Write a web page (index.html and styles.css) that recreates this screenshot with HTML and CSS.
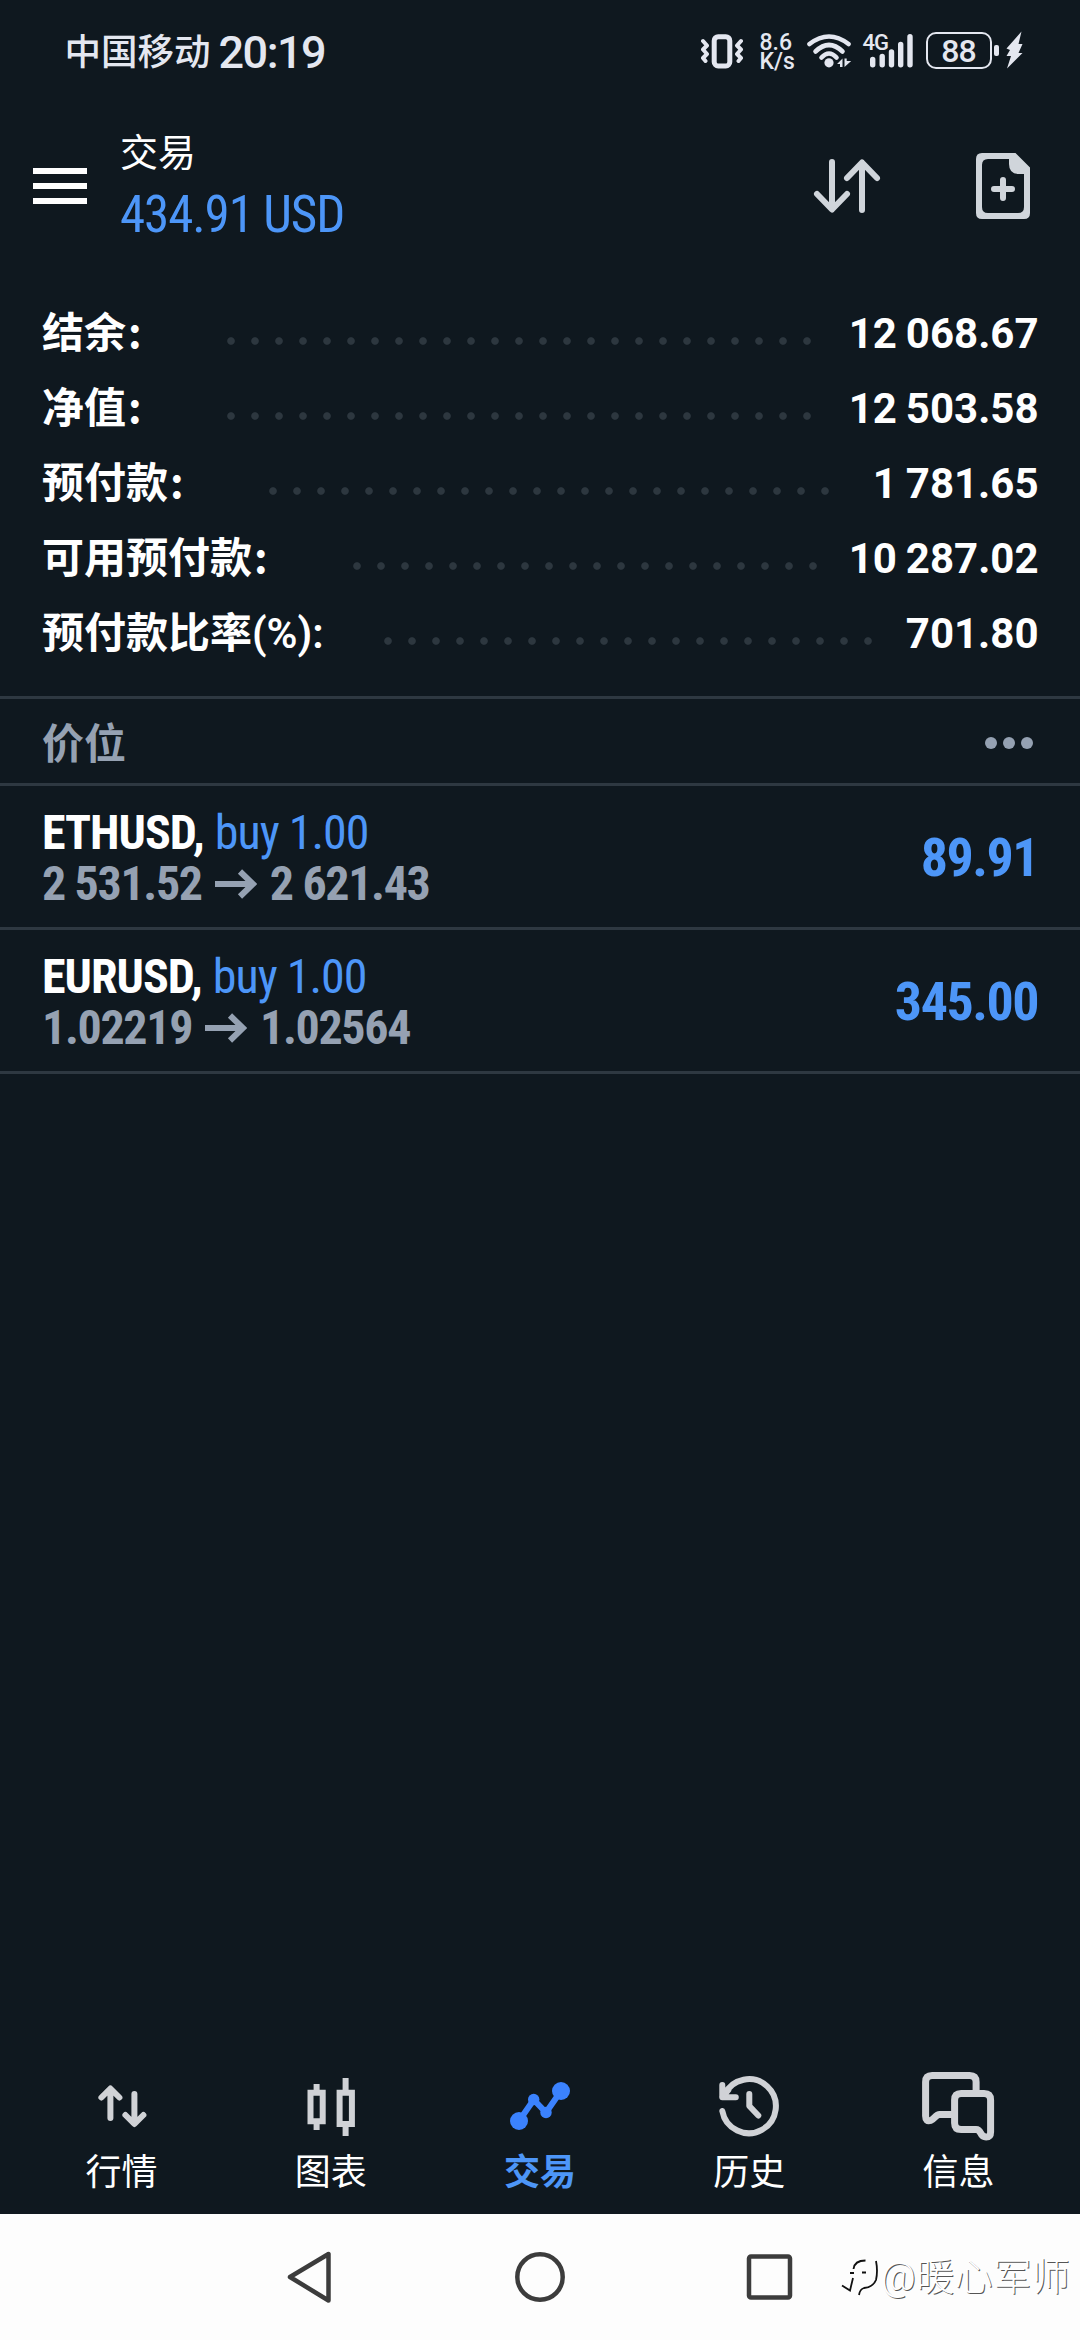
FILE: index.html
```
<!DOCTYPE html>
<html lang="zh-CN">
<head>
<meta charset="utf-8">
<title>交易</title>
<link rel="stylesheet" href="styles.css">
</head>
<body>
<div class="screen">
  <div class="status">
    <span class="carrier">中国移动</span>
    <span class="clock">20:19</span>
    <div class="indicators">
      <svg class="vibrate" width="43" height="40" viewBox="700 30 43 40"><rect x="713.2" y="36.7" width="15.6" height="29.3" rx="4" fill="none" stroke="#e4e7f0" stroke-width="5"/><path d="M702 41l4 4.500-4 4 4 4.500-4 4 2.500 3M740 41l-4 4.500 4 4-4 4.500 4 4-2.500 3" fill="none" stroke="#e4e7f0" stroke-width="4" stroke-linejoin="round" stroke-linecap="round"/></svg>
      <div class="speed"><span>8.6</span><span>K/s</span></div>
      <svg class="wifi" width="46" height="40" viewBox="806 30 46 40"><g fill="none" stroke="#e4e7f0" stroke-width="4.600" stroke-linecap="round"><path d="M808.500 44Q828 29 847.500 44"/><path d="M814.500 51.500Q828 38.500 841.500 51.500"/><path d="M820.500 57.500Q828 49.500 835.500 57.500"/></g><circle cx="828" cy="62.800" r="4.600" fill="#e4e7f0"/><path d="M836 64l5.500-5.500V67h-2.500v-3zM843.500 67v-8.500h2.200v2.500h4.500z" fill="#e4e7f0"/></svg>
      <div class="signal"><span class="net">4G</span><svg width="44" height="40" viewBox="869 30 44 40"><path d="M871.700 59.500v5.300M881.200 56.500v8.300M890.500 52v12.800M899.700 44.500v20.300M909 36.800v28" stroke="#e4e7f0" stroke-width="5.400" stroke-linecap="round"/></svg></div>
      <div class="battery">88</div>
      <i class="nub"></i>
      <svg class="bolt" width="18" height="38" viewBox="1003 31 18 38"><path d="M1019.500 31.500L1004.500 48.500l3.500 1.500-3.500 6h4.500L1005 68.500 1020.500 53h-4l4-9h-4z" fill="#e4e7f0"/></svg>
    </div>
  </div>

  <header class="header">
    <div class="menu"><i></i><i></i><i></i></div>
    <div class="titles"><div class="title">交易</div><div class="amount">434.91 USD</div></div>
    <svg class="sort" width="72" height="66" viewBox="810 153 72 66"><path d="M831 162v47M816 194l15 15.500 15-15.500M861 210v-47M846 178l15-15.500 15 15.500" fill="none" stroke="#d0d5db" stroke-width="6" stroke-linecap="round" stroke-linejoin="round"/></svg>
    <svg class="new-order" width="54" height="66" viewBox="975 153 54 66"><path d="M981 153h33.500L1029 167.500V213q0 6-6 6h-42q-6 0-6-6v-54q0-6 6-6zM987 159q-6 0-6 6v42q0 6 6 6h30q6 0 6-6v-33h-5q-10 0-10-10v-5z" fill="#d0d5db" fill-rule="evenodd"/><path d="M1002 180v18M993 189h18" stroke="#d0d5db" stroke-width="6" stroke-linecap="round"/></svg>
  </header>

  <section class="summary">
    <div class="row"><span class="label">结余<span class="colon">:</span></span><i class="dots" style="width:600px"></i><span class="value">12 068.67</span></div>
    <div class="row"><span class="label">净值<span class="colon">:</span></span><i class="dots" style="width:600px"></i><span class="value">12 503.58</span></div>
    <div class="row"><span class="label">预付款<span class="colon">:</span></span><i class="dots" style="width:576px"></i><span class="value">1 781.65</span></div>
    <div class="row"><span class="label">可用预付款<span class="colon">:</span></span><i class="dots" style="width:480px"></i><span class="value">10 287.02</span></div>
    <div class="row"><span class="label ratio">预付款比率<span class="latin">(%):</span></span><i class="dots" style="width:504px"></i><span class="value">701.80</span></div>
  </section>

  <div class="section-head"><span>价位</span><svg class="more" width="48" height="12" viewBox="0 0 48 12"><g fill="#95a1b2"><circle cx="6" cy="6" r="6"/><circle cx="24" cy="6" r="6"/><circle cx="42" cy="6" r="6"/></g></svg></div>

  <div class="position">
    <div class="detail">
      <div class="line"><b>ETHUSD,</b><span class="side">buy 1.00</span></div>
      <div class="line prices"><span>2 531.52</span><svg width="42" height="30" viewBox="0 0 42 30"><path d="M0 15h38M25 2.500L38 15 25 27.500" fill="none" stroke="#95a1b2" stroke-width="6"/></svg><span>2 621.43</span></div>
    </div>
    <div class="profit">89.91</div>
  </div>
  <div class="position">
    <div class="detail">
      <div class="line"><b>EURUSD,</b><span class="side">buy 1.00</span></div>
      <div class="line prices"><span>1.02219</span><svg width="42" height="30" viewBox="0 0 42 30"><path d="M0 15h38M25 2.500L38 15 25 27.500" fill="none" stroke="#95a1b2" stroke-width="6"/></svg><span>1.02564</span></div>
    </div>
    <div class="profit">345.00</div>
  </div>

  <nav class="tabs">
    <div class="tab"><svg width="90" height="75" viewBox="76.600 2070 90 75"><path d="M110 2118v-29M101 2097.500l9-9 9 9M134 2094v29M125 2115l9 9 9-9" fill="none" stroke="#d0d2d6" stroke-width="6" stroke-linecap="round" stroke-linejoin="round"/></svg><span>行情</span></div>
    <div class="tab"><svg width="90" height="75" viewBox="285.800 2070 90 75"><path d="M310.300 2092.700h12.200v28.600h-12.200zM339.400 2092.700h12.300v31.300h-12.300zM316.400 2084v7M316.400 2123v7M345.400 2078v13M345.400 2126v10" fill="none" stroke="#d0d2d6" stroke-width="6"/></svg><span>图表</span></div>
    <div class="tab active"><svg width="90" height="75" viewBox="495 2070 90 75"><path d="M519 2121l14.700-21.300L546 2112.500l15-21.500" fill="none" stroke="#3b82fe" stroke-width="6"/><g fill="#3b82fe"><circle cx="519" cy="2121" r="9"/><circle cx="533.700" cy="2099.500" r="5.700"/><circle cx="546" cy="2112.500" r="5.700"/><circle cx="561" cy="2091" r="9"/></g></svg><span>交易</span></div>
    <div class="tab"><svg width="90" height="75" viewBox="703.700 2070 90 75"><path d="M722 2111A27 27 0 1 0 724 2095M722 2085v12.200h13.500M722 2097l6-7M749 2094v12l9 9.500" fill="none" stroke="#d0d2d6" stroke-width="6" stroke-linecap="round" stroke-linejoin="round"/></svg><span>历史</span></div>
    <div class="tab"><svg width="90" height="75" viewBox="912.900 2070 90 75"><g fill="none" stroke="#d0d2d6" stroke-width="7" stroke-linejoin="round"><path d="M976 2091v-9q0-6.500-6.500-6.500h-37.500q-6.500 0-6.500 6.500v34q0 6 5 4.500c4-1.500 5-6 9-6h14"/><path d="M961 2093.500h23q6.500 0 6.500 6.500v32q0 5-4.500 5c-7 0-4-7.500-10-7.500h-15q-6.500 0-6.500-6.500v-23q0-6.500 6.500-6.500z"/></g></svg><span>信息</span></div>
  </nav>

  <div class="sysnav">
    <svg width="60" height="60" viewBox="279.500 2247 60 60"><path d="M328 2254v46.500L289.500 2277z" fill="none" stroke="#3c3c3c" stroke-width="4.500" stroke-linejoin="round"/></svg>
    <svg width="60" height="60" viewBox="510 2247 60 60"><circle cx="540" cy="2277" r="22.700" fill="none" stroke="#3c3c3c" stroke-width="4.500"/></svg>
    <svg width="60" height="60" viewBox="739.500 2247 60 60"><rect x="748.500" y="2256.500" width="41" height="41" rx="2" fill="none" stroke="#3c3c3c" stroke-width="4.500"/></svg>
    <div class="watermark"><svg width="38" height="42" viewBox="840 2263 38 42"><path d="M852.500 2276q1-8.500 12-8.500M849 2280h4M861 2279.500h4M852 2285l-3 12.500-8-5M875 2268q2 10 0 19-3 7-12 8-4 1-5 7" fill="none" stroke="#111" stroke-width="1.800"/></svg><span>@暖心军师</span></div>
  </div>
</div>
</body>
</html>
```

FILE: styles.css
```
* { box-sizing: border-box; }
body { margin: 0; background: #0f181f; font-family: Roboto, "Noto Sans CJK SC", sans-serif; }
svg { display: block; flex: none; }
.screen { width: 1080px; height: 2340px; display: flex; flex-direction: column; background: #0f181f; color: #fff; overflow: hidden; }

.status { height: 104px; padding: 30px 57px 0 64.500px; display: flex; align-items: flex-start; color: #e4e7f0; }
.carrier { padding-top: 1px; font-size: 36.500px; line-height: 44px; font-weight: 500; }
.clock { margin-left: 8px; padding-top: 1px; font-size: 45px; line-height: 44px; font-weight: 500; letter-spacing: -1.500px; }
.indicators { margin-left: auto; display: flex; align-items: flex-start; }
.speed { width: 34px; margin: 3px 13px 0 16px; display: flex; flex-direction: column; font-size: 23px; line-height: 19px; font-weight: 500; }
.signal { position: relative; margin: 0 12px 0 17px; }
.net { position: absolute; left: -7px; top: 2px; font-size: 22px; line-height: 22px; font-weight: 500; letter-spacing: -1px; }
.battery { width: 66px; height: 37px; margin-top: 2px; border: 2.500px solid #e4e7f0; border-radius: 10px; font-size: 32px; line-height: 34px; text-align: center; font-weight: 500; letter-spacing: -1px; }
.nub { width: 5px; height: 11px; margin: 15px 6px 0 2.500px; border-radius: 2px; background: #e4e7f0; }
.bolt { margin-top: 1px; }

.header { height: 164px; margin-bottom: 24px; padding: 0 50px 0 33px; display: flex; align-items: center; }
.menu { width: 54px; display: flex; flex-direction: column; gap: 9px; }
.menu i { height: 6px; background: #fff; }
.titles { margin: 0 auto 0 33px; }
.title { font-size: 38px; line-height: 53px; }
.amount { padding-top: 3px; font-family: "Roboto Condensed", Roboto, sans-serif; font-size: 51px; line-height: 63px; color: #4d96f8; letter-spacing: -1.100px; }
.sort { margin-right: 93px; }

.summary { padding: 0 41.500px 29px 42px; }
.row { height: 75px; display: flex; align-items: baseline; font-size: 42px; line-height: 75px; font-weight: 700; }
.label { font-family: "Noto Sans CJK SC", sans-serif; margin-right: 77px; white-space: nowrap; }
.colon { padding-left: 2px; }
.ratio { margin-right: 52px; }
.latin { font-family: Roboto, sans-serif; font-weight: 600; }
.dots { height: 10px; flex: none; position: relative; top: -2px; background: radial-gradient(circle at center, #2d373f 3.300px, transparent 4.200px) 0 0 / 24px 10px repeat-x; }
.value { margin-left: auto; white-space: nowrap; word-spacing: -1.500px; }

.section-head { height: 90px; padding: 0 47px 0 42px; border-top: 3px solid #2e3841; border-bottom: 3px solid #2e3841; display: flex; justify-content: space-between; align-items: center; font-family: "Noto Sans CJK SC", sans-serif; font-size: 42px; line-height: 84px; font-weight: 700; color: #95a1b2; }
.more { margin-top: 4px; }
.position { height: 144px; padding: 21px 42px 18px; border-bottom: 3px solid #2e3841; display: flex; justify-content: space-between; align-items: center; font-family: "Roboto Condensed", Roboto, sans-serif; }
.line { height: 51px; display: flex; align-items: center; font-size: 48px; line-height: 51px; white-space: nowrap; letter-spacing: -1px; }
.side { margin-left: 11px; color: #4d96f8; }
.prices { gap: 13px; font-weight: 700; color: #95a1b2; letter-spacing: -1.350px; }
.profit { font-size: 54px; line-height: 60px; font-weight: 700; color: #4d96f8; letter-spacing: -1.500px; }

.tabs { margin-top: auto; height: 144px; padding: 0 17px; display: flex; }
.tab { flex: 1; display: flex; flex-direction: column; align-items: center; font-family: "Noto Sans CJK SC", sans-serif; font-size: 36px; line-height: 48px; }
.active { color: #4d96f8; font-weight: 700; }

.sysnav { position: relative; height: 126px; background: #fdfdfd; display: flex; justify-content: center; align-items: center; gap: 170px; }
.watermark { position: absolute; left: 841px; top: 37px; display: flex; align-items: center; gap: 2px; font-size: 38px; line-height: 52px; font-weight: 300; color: #fff; text-shadow: 1px 1px 0.500px #555; letter-spacing: 0.500px; white-space: nowrap; }
```
